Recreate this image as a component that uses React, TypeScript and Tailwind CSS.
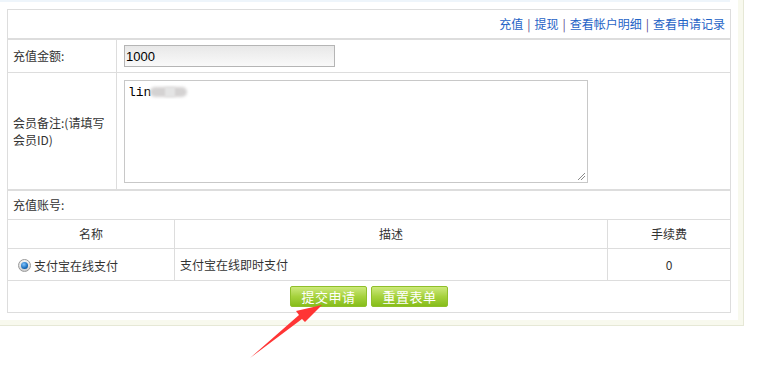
import React from "react";

const font = { fontFamily: '"Microsoft YaHei", "Noto Sans CJK SC", "Noto Sans", sans-serif' };

export default function App() {
  return (
    <div className="relative w-[778px] h-[369px] bg-white text-[12px] text-[#333]" style={font}>
      <div className="w-[744px] bg-[#f8f9ee] border-r border-b border-[#e6e8d6] pr-[5px] pb-[5px]">
        <div className="w-[738px] bg-white pb-[7px]">
          <div className="h-[2px] w-[730px] bg-[#eef5fb]" />
          <div className="ml-[7px] mt-[7px] w-[724px] border border-[#dddddd]">
            {/* header links */}
            <div className="h-[30px] flex items-center justify-end pr-[5px] border-b-2 border-[#dddddd] text-[#1f63c6] whitespace-pre">
              <span>充值</span>
              <span className="text-[#5a4a8a] px-[4px]">|</span>
              <span>提现</span>
              <span className="text-[#5a4a8a] px-[4px]">|</span>
              <span>查看帐户明细</span>
              <span className="text-[#5a4a8a] px-[4px]">|</span>
              <span>查看申请记录</span>
            </div>
            {/* amount */}
            <div className="flex h-[33px] border-b border-[#dddddd]">
              <div className="w-[109px] border-r border-[#dddddd] flex items-center pl-[5px]">充值金额:</div>
              <div className="flex items-center pl-[7px]">
                <div
                  className="w-[211px] h-[22px] border border-[#b5b5b5] bg-gradient-to-b from-[#e8e8e8] to-[#f9f9f9] flex items-center pl-[1px] text-[13px] text-black leading-none"
                  style={{ fontFamily: '"Liberation Sans", Arial, sans-serif' }}
                >
                  1000
                </div>
              </div>
            </div>
            {/* remark */}
            <div className="flex h-[118px] border-b-2 border-[#dddddd]">
              <div className="w-[109px] border-r border-[#dddddd] flex items-center pl-[5px] leading-[17px]">
                <span>
                  会员备注:(请填写
                  <br />
                  会员ID)
                </span>
              </div>
              <div className="pl-[7px] pt-[7px]">
                <div className="relative w-[464px] h-[103px] border border-[#c8c8c8] bg-white">
                  <div
                    className="absolute left-[3px] top-[4px] text-[13px] text-black leading-[16px]"
                    style={{ fontFamily: '"Liberation Mono", "Courier New", monospace' }}
                  >
                    lin
                  </div>
                  <div className="absolute left-[25px] top-[6px] w-[37px] h-[10px] rounded-full bg-[#d4d2d2] blur-[1.5px]" />
                  <div className="absolute left-[40px] top-[6px] w-[10px] h-[10px] bg-[#e4e4e4] blur-[1px]" />
                  <svg className="absolute right-[1px] bottom-[1px]" width="9" height="9" viewBox="0 0 9 9">
                    <line x1="1" y1="8" x2="8" y2="1" stroke="#8a8a8a" strokeWidth="1" />
                    <line x1="4" y1="8" x2="8" y2="4" stroke="#8a8a8a" strokeWidth="1" />
                  </svg>
                </div>
              </div>
            </div>
            {/* account label */}
            <div className="h-[29px] border-b border-[#dddddd] flex items-center pl-[5px]">充值账号:</div>
            {/* table header */}
            <div className="flex h-[29px] border-b border-[#dddddd]">
              <div className="w-[167px] border-r border-[#dddddd] flex items-center justify-center">名称</div>
              <div className="w-[433px] border-r border-[#dddddd] flex items-center justify-center">描述</div>
              <div className="flex-1 flex items-center justify-center">手续费</div>
            </div>
            {/* data row */}
            <div className="flex h-[32px] border-b border-[#dddddd]">
              <div className="w-[167px] border-r border-[#dddddd] flex items-center pl-[10px]">
                <span className="w-[13px] h-[13px] rounded-full border border-[#9a9a9a] bg-gradient-to-b from-[#f4f4f4] to-[#cfcfcf] flex items-center justify-center mr-[3px] mt-[1px]">
                  <span className="w-[7px] h-[7px] rounded-full bg-[radial-gradient(circle_at_40%_35%,#7fc4ff,#0a5fb0_70%,#063f7a)]" />
                </span>
                <span className="mt-[2px]">支付宝在线支付</span>
              </div>
              <div className="w-[433px] border-r border-[#dddddd] flex items-center pl-[5px]">支付宝在线即时支付</div>
              <div className="flex-1 flex items-center justify-center">0</div>
            </div>
            {/* buttons */}
            <div className="h-[31px] flex items-start justify-center pt-[5px] gap-[4px]">
              <button className="w-[77px] h-[21px] border border-[#8fbf2a] rounded-[2px] bg-gradient-to-b from-[#cde97a] via-[#a6d23c] to-[#86bd18] text-white text-[13px] tracking-[0.5px] leading-none">
                提交申请
              </button>
              <button className="w-[77px] h-[21px] border border-[#8fbf2a] rounded-[2px] bg-gradient-to-b from-[#cde97a] via-[#a6d23c] to-[#86bd18] text-white text-[13px] tracking-[0.5px] leading-none">
                重置表单
              </button>
            </div>
          </div>
        </div>
      </div>
      {/* red arrow annotation */}
      <svg className="absolute left-0 top-0 pointer-events-none" width="778" height="369">
        <polygon points="322,305 296,311 299,315 250,358 302,319 305,322" fill="#ff3535" />
      </svg>
    </div>
  );
}
